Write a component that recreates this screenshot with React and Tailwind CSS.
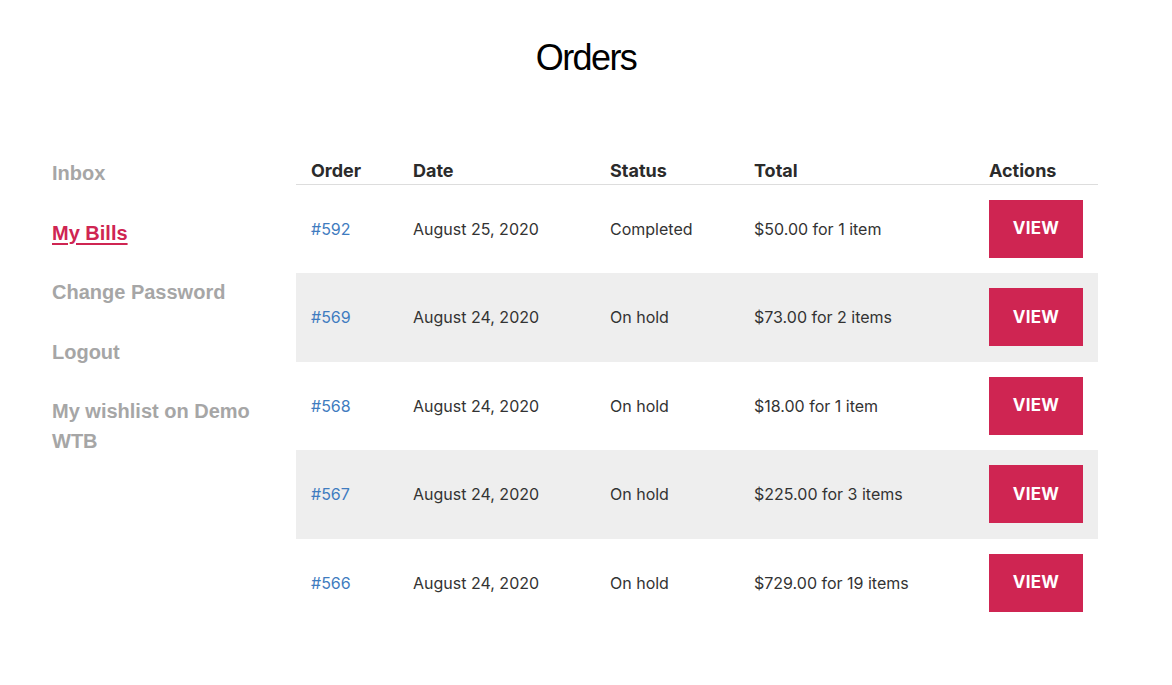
import React from 'react';

const orders = [
    { id: '#592', date: 'August 25, 2020', status: 'Completed', total: '$50.00 for 1 item' },
    { id: '#569', date: 'August 24, 2020', status: 'On hold', total: '$73.00 for 2 items' },
    { id: '#568', date: 'August 24, 2020', status: 'On hold', total: '$18.00 for 1 item' },
    { id: '#567', date: 'August 24, 2020', status: 'On hold', total: '$225.00 for 3 items' },
    { id: '#566', date: 'August 24, 2020', status: 'On hold', total: '$729.00 for 19 items' },
];

const navItems = ['Inbox', 'My Bills', 'Change Password', 'Logout', 'My wishlist on Demo WTB'];

const Sidebar = () => {
    return (
        <nav className="w-[244px] shrink-0 pt-[3px] pr-[24px] flex flex-col gap-[29.5px] font-['Liberation_Sans',Arial,sans-serif] font-bold text-[20px] leading-[30px]">
            {navItems.map((item) => (
                item === 'My Bills'
                    ? <a key={item} href="#" className="text-[#cf2552] underline underline-offset-[3px] decoration-[2px] w-fit">{item}</a>
                    : <a key={item} href="#" className="text-[#a6a6a6]">{item}</a>
            ))}
        </nav>
    )
}

const OrdersTable = () => {
    return (
        <table className="w-[802px] table-fixed border-collapse font-['Inter',sans-serif] text-[16px] text-[#333333]">
            <colgroup>
                <col className="w-[102px]" />
                <col className="w-[197px]" />
                <col className="w-[144px]" />
                <col className="w-[235px]" />
                <col className="w-[124px]" />
            </colgroup>
            <thead>
                <tr className="border-b border-[#dddddd]">
                    {['Order', 'Date', 'Status', 'Total', 'Actions'].map((h) => (
                        <th key={h} className="text-left pl-[15px] pt-[4px] pb-[1px] leading-[24px] text-[18px] font-bold text-[#2b2b2b]">{h}</th>
                    ))}
                </tr>
            </thead>
            <tbody>
                {orders.map((o, i) => (
                    <tr key={o.id} className={i % 2 === 1 ? 'h-[88.5px] bg-[#eeeeee]' : 'h-[88.5px] bg-white'}>
                        <td className="pl-[15px] align-middle"><a href="#" className="text-[#3f7cc0]">{o.id}</a></td>
                        <td className="pl-[15px] align-middle">{o.date}</td>
                        <td className="pl-[15px] align-middle">{o.status}</td>
                        <td className="pl-[15px] align-middle">{o.total}</td>
                        <td className="pl-[15px] align-middle">
                            <button className="block w-[94px] h-[58px] bg-[#cf2552] text-white font-bold text-[17px] tracking-[0.3px]">VIEW</button>
                        </td>
                    </tr>
                ))}
            </tbody>
        </table>
    )
}

export default function App() {
    return (
        <div className="w-[1172px] h-[685px] bg-white pt-[38px]">
            <h1 className="text-center font-['Liberation_Sans',Arial,sans-serif] text-[36px] leading-[40px] tracking-[-1.6px] text-black">Orders</h1>
            <div className="flex pl-[52px] mt-[77px]">
                <Sidebar />
                <OrdersTable />
            </div>
        </div>
    )
}
